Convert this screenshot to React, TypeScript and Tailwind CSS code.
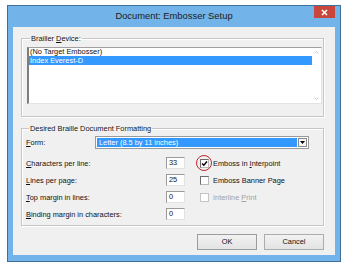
import React from "react";

const U = ({ children }: { children: React.ReactNode }) => (
  <span className="underline underline-offset-[1px] decoration-[0.5px]">{children}</span>
);

const CheckBox = ({ checked, disabled }: { checked?: boolean; disabled?: boolean }) => (
  <div
    className={`w-[9px] h-[9px] border bg-white flex items-center justify-center ${
      disabled ? "border-[#c4c4c4]" : "border-t-[#6d6d6d] border-l-[#6d6d6d] border-r-[#b8b8b8] border-b-[#b8b8b8]"
    }`}
  >
    {checked && (
      <svg width="7" height="7" viewBox="0 0 7 7">
        <path d="M1 3.5 L2.8 5.3 L6 1.5" stroke="#000" strokeWidth="1.4" fill="none" />
      </svg>
    )}
  </div>
);

const NumField = ({ value }: { value: string }) => (
  <div className="w-[19px] h-[12px] bg-white border border-t-[#9a9a9a] border-l-[#9a9a9a] border-r-[#e2e2e2] border-b-[#e2e2e2] pl-[2px] text-[7.4px] leading-[10px]">
    {value}
  </div>
);

export default function App() {
  return (
    <div className="w-[352px] h-[270px] bg-white pt-[5px] pl-[7px] font-['Liberation_Sans',Arial,sans-serif] text-[#111]">
      <div className="w-[334px] h-[257px] border border-[#3d6f9b] bg-[#72b3e9] flex flex-col px-[5px] pb-[6px]">
        {/* title bar */}
        <div className="h-[21px] flex items-start">
          <div className="w-[21px]" />
          <div className="flex-1 text-center text-[9.4px] leading-[20px] text-[#1b1b1b]">
            Document: Embosser Setup
          </div>
          <div className="w-[21px] h-[12px] bg-[#c9463d] flex items-center justify-center">
            <svg width="7" height="7" viewBox="0 0 7 7">
              <path d="M1 1 L6 6 M6 1 L1 6" stroke="#fff" strokeWidth="1.6" />
            </svg>
          </div>
        </div>

        {/* client */}
        <div className="flex-1 bg-[#f0f0f0] pl-[8px] pr-[11px] pt-[7px] text-[7.4px] leading-[9px]">
          <fieldset className="h-[83px] border border-[#c6c6c6] shadow-[1px_1px_0_#fff,inset_1px_1px_0_#fff] pl-[5px] pr-[1px]">
            <legend className="ml-[3px] px-[1px]">
              Brailler <U>D</U>evice:
            </legend>
            <div className="mt-[4px] h-[57px] flex bg-white border border-t-[#a0a0a0] border-l-[#7d7d7d] border-l-2 border-r-[#e3e3e3] border-b-[#e3e3e3]">
              <div className="flex-1 flex flex-col">
                <div className="h-[8px] leading-[8px] pl-[1px]">(No Target Embosser)</div>
                <div className="h-[9px] leading-[9px] pl-[1px] bg-[#3399ff] text-white">Index Everest-D</div>
              </div>
              <div className="w-[9px] flex flex-col justify-between items-center py-[3px]">
                <svg width="5" height="3" viewBox="0 0 5 3">
                  <path d="M0.5 2.5 L2.5 0.5 L4.5 2.5" stroke="#c8c8c8" fill="none" />
                </svg>
                <svg width="5" height="3" viewBox="0 0 5 3">
                  <path d="M0.5 0.5 L2.5 2.5 L4.5 0.5" stroke="#c8c8c8" fill="none" />
                </svg>
              </div>
            </div>
          </fieldset>

          <fieldset className="mt-[7px] h-[102px] border border-[#c6c6c6] shadow-[1px_1px_0_#fff,inset_1px_1px_0_#fff] pl-[4px] pr-[1px]">
            <legend className="ml-[3px] px-[1px]">Desired Braille Document Formatting</legend>

            <div className="mt-[3px] h-[13px] flex items-center">
              <div className="w-[69px]">
                <U>F</U>orm:
              </div>
              <div className="w-[214px] h-[13px] flex border border-[#9a9a9a] bg-white p-[1px]">
                <div className="flex-1 bg-[#3399ff] text-white leading-[9px] pl-[2px]">Letter (8.5 by 11 inches)</div>
                <div className="w-[9px] ml-[1px] border border-[#8a8a8a] bg-[#f4f4f4] flex items-center justify-center">
                  <svg width="5" height="3" viewBox="0 0 5 3">
                    <path d="M0 0 H5 L2.5 3 Z" fill="#000" />
                  </svg>
                </div>
              </div>
            </div>

            <div className="mt-[8px] flex">
              <div className="w-[174px] flex flex-col gap-[5px]">
                <div className="h-[12px] flex items-center">
                  <div className="w-[140px]">
                    <U>C</U>haracters per line:
                  </div>
                  <NumField value="33" />
                </div>
                <div className="h-[12px] flex items-center">
                  <div className="w-[140px]">
                    <U>L</U>ines per page:
                  </div>
                  <NumField value="25" />
                </div>
                <div className="h-[12px] flex items-center">
                  <div className="w-[140px]">
                    <U>T</U>op margin in lines:
                  </div>
                  <NumField value="0" />
                </div>
                <div className="h-[12px] flex items-center">
                  <div className="w-[140px]">
                    <U>B</U>inding margin in characters:
                  </div>
                  <NumField value="0" />
                </div>
              </div>

              <div className="flex flex-col gap-[5px]">
                <div className="h-[12px] flex items-center gap-[4px]">
                  <div className="relative">
                    <CheckBox checked />
                    <div className="absolute left-[-4px] top-[-4px] w-[16px] h-[16px] rounded-full border-[1.5px] border-[#c1272d]" />
                  </div>
                  <span>
                    Emboss in <U>I</U>nterpoint
                  </span>
                </div>
                <div className="h-[12px] flex items-center gap-[4px]">
                  <CheckBox />
                  <span>Emboss Banner Page</span>
                </div>
                <div className="h-[12px] flex items-center gap-[4px] text-[#a3a3a3]">
                  <CheckBox disabled />
                  <span>
                    Interline <U>P</U>rint
                  </span>
                </div>
              </div>
            </div>
          </fieldset>

          <div className="mt-[8px] flex justify-end gap-[7px]">
            <button className="w-[60px] h-[16px] border border-[#9c9c9c] bg-gradient-to-b from-[#f2f2f2] to-[#e3e3e3] text-[7.4px] leading-[14px]">
              OK
            </button>
            <button className="w-[60px] h-[16px] border border-[#acacac] bg-gradient-to-b from-[#f2f2f2] to-[#e3e3e3] text-[7.4px] leading-[14px]">
              Cancel
            </button>
          </div>
        </div>
      </div>
    </div>
  );
}
